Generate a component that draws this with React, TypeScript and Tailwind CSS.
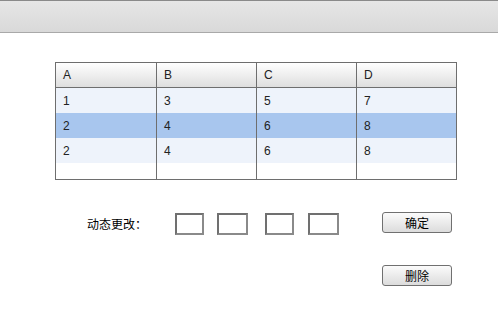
const headers = ["A", "B", "C", "D"];
const rows = [
  { cells: ["1", "3", "5", "7"], active: false },
  { cells: ["2", "4", "6", "8"], active: true },
  { cells: ["2", "4", "6", "8"], active: false },
];

const btn =
  "flex h-[21px] w-[70px] items-center justify-center rounded-[3px] border border-[#707070] bg-gradient-to-b from-[#fbfbfb] to-[#dcdcdc] text-[12px] text-black";

const App = () => {
  return (
    <div className="h-[316px] w-[498px] bg-white font-['Liberation_Sans','Noto_Sans_CJK_SC',sans-serif] text-[12px] text-[#222]">
      {/* top bar */}
      <div className="h-[33px] border-y border-t-[#8a8a8a] border-b-[#a9a9a9] bg-gradient-to-b from-[#e6e6e6] to-[#d9d9d9]" />

      <div className="ml-[55px] mt-[29px] w-[402px] border border-[#6e6e6e]">
        <div className="grid h-[25px] grid-cols-[101px_100px_100px_99px] border-b border-[#6e6e6e] bg-gradient-to-b from-white to-[#dedede]">
          {headers.map((h, i) => (
            <div
              key={h}
              className={`flex items-center pl-[7px] ${i < 3 ? "border-r border-[#6e6e6e]" : ""}`}
            >
              {h}
            </div>
          ))}
        </div>
        {rows.map((row, r) => (
          <div key={r} className="grid grid-cols-[101px_100px_100px_99px]">
            {row.cells.map((c, i) => (
              <div
                key={i}
                className={`flex h-[25px] items-center pl-[7px] ${row.active ? "bg-[#a8c6ee]" : "bg-[#eef3fb]"} ${i < 3 ? "border-r border-[#6e6e6e]" : ""}`}
              >
                {c}
              </div>
            ))}
          </div>
        ))}
        <div className="grid h-[16px] grid-cols-[101px_100px_100px_99px]">
          {headers.map((h, i) => (
            <div key={h} className={i < 3 ? "border-r border-[#6e6e6e]" : ""} />
          ))}
        </div>
      </div>

      <div className="mt-[32px] flex items-start">
        <span className="ml-[87px] mt-[1px] w-[88px] font-['Noto_Sans_CJK_SC',sans-serif] text-[12px] leading-[22px] text-black">
          动态更改：
        </span>
        <input className="mt-[1px] h-[22px] w-[29px] border-2 border-[#707070] border-b-[#8a8a8a] border-r-[#8a8a8a] bg-white" />
        <input className="ml-[13px] mt-[1px] h-[22px] w-[31px] border-2 border-[#707070] border-b-[#8a8a8a] border-r-[#8a8a8a] bg-white" />
        <input className="ml-[17px] mt-[1px] h-[22px] w-[29px] border-2 border-[#707070] border-b-[#8a8a8a] border-r-[#8a8a8a] bg-white" />
        <input className="ml-[14px] mt-[1px] h-[22px] w-[31px] border-2 border-[#707070] border-b-[#8a8a8a] border-r-[#8a8a8a] bg-white" />
        <button className={`ml-[43px] ${btn} font-['Noto_Sans_CJK_SC',sans-serif]`}>确定</button>
      </div>

      <div className="mt-[30px] flex">
        <button className={`ml-[382px] ${btn} font-['Noto_Sans_CJK_SC',sans-serif]`}>删除</button>
      </div>
    </div>
  );
};

export default App;
